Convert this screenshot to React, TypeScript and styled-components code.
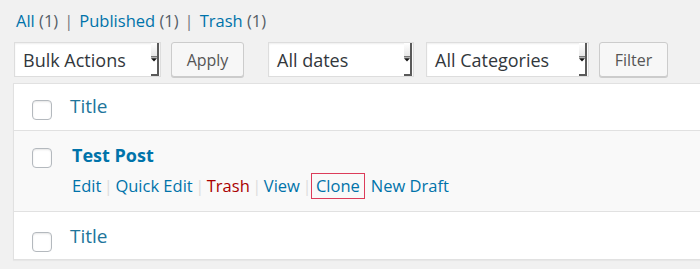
import React from "react";
import styled, { createGlobalStyle } from "styled-components";

const Global = createGlobalStyle`
  html, body { margin: 0; padding: 0; background: #f1f1f1; }
  body { font-family: "Open Sans", "Noto Sans", sans-serif; color: #32373c; overflow: hidden; }
`;

const Page = styled.div`
  padding: 9px 0 0 13px;
  width: 700px;
  height: 269px;
  box-sizing: border-box;
  overflow: hidden;
`;

const Views = styled.ul`
  list-style: none;
  margin: 0 0 0 3px;
  padding: 0;
  display: flex;
  align-items: center;
  height: 22px;
  font-size: 16.5px;
  color: #555d66;
`;

const ViewItem = styled.li`
  display: flex;
  align-items: center;
  white-space: pre;
`;

const ViewLink = styled.a`
  color: #0073aa;
  text-decoration: none;
`;

const Sep = styled.span`
  color: #72777c;
  margin: 0 6px;
`;

const Toolbar = styled.div`
  display: flex;
  align-items: center;
  margin-top: 11px;
  height: 35px;
`;

const SelectBox = styled.div<{ $w: number; $ml: number }>`
  width: ${(p) => p.$w}px;
  margin-left: ${(p) => p.$ml}px;
  height: 35px;
  box-sizing: border-box;
  background: #fff;
  border: 1px solid #ddd;
  box-shadow: inset 0 1px 2px rgba(0, 0, 0, 0.07);
  display: flex;
  align-items: center;
  padding-left: 8px;
  font-size: 18px;
  color: #32373c;
`;

const SelectText = styled.span`
  flex: 1;
  white-space: nowrap;
`;

const ArrowWrap = styled.span`
  width: 8px;
  height: 33px;
  margin-right: 1px;
  display: flex;
  align-items: center;
  justify-content: center;
  border-right: 2px solid #5a5a5a;
  border-bottom: 2px solid #5a5a5a;
  box-sizing: border-box;
  background: linear-gradient(#fff 0, #e8e8e8 40%, #fff 60%);
`;

const Button = styled.div<{ $w: number; $ml: number }>`
  width: ${(p) => p.$w}px;
  margin-left: ${(p) => p.$ml}px;
  height: 35px;
  box-sizing: border-box;
  border: 1px solid #ccc;
  border-radius: 3px;
  background: #f7f7f7;
  box-shadow: 0 1px 0 #ccc;
  display: flex;
  align-items: center;
  justify-content: center;
  font-size: 16px;
  color: #555;
`;

const Table = styled.div`
  margin-top: 6px;
  width: 700px;
  background: #fff;
  border: 1px solid #e1e1e1;
  border-right: none;
  box-shadow: 0 1px 1px rgba(0, 0, 0, 0.04);
`;

const Row = styled.div<{ $h: number; $alt?: boolean; $top?: boolean }>`
  display: flex;
  align-items: flex-start;
  height: ${(p) => p.$h}px;
  box-sizing: border-box;
  background: ${(p) => (p.$alt ? "#f9f9f9" : "#fff")};
  border-top: ${(p) => (p.$top ? "1px solid #e1e1e1" : "none")};
  border-bottom: ${(p) => (p.$top ? "1px solid #e1e1e1" : "none")};
`;

const CheckCell = styled.div<{ $pt: number }>`
  width: 56px;
  display: flex;
  justify-content: center;
  padding-top: ${(p) => p.$pt}px;
`;

const Check = styled.span`
  width: 20px;
  height: 20px;
  box-sizing: border-box;
  border: 1px solid #b4b9be;
  border-radius: 4px;
  background: #fff;
  box-shadow: inset 0 1px 2px rgba(0, 0, 0, 0.1);
  display: block;
`;

const TitleCell = styled.div<{ $pt: number }>`
  padding-top: ${(p) => p.$pt}px;
  display: flex;
  flex-direction: column;
`;

const HeadTitle = styled.a`
  color: #21759b;
  font-size: 19px;
  text-decoration: none;
  line-height: 24px;
`;

const PostTitle = styled.a`
  color: #0073aa;
  font-size: 18px;
  font-weight: 700;
  text-decoration: none;
  line-height: 24px;
  margin-left: 2px;
`;

const Actions = styled.div`
  display: flex;
  align-items: center;
  margin-top: 6px;
  margin-left: 2px;
  font-size: 16.5px;
  line-height: 20px;
`;

const Action = styled.a<{ $danger?: boolean; $boxed?: boolean }>`
  color: ${(p) => (p.$danger ? "#a00" : "#0073aa")};
  text-decoration: none;
  ${(p) =>
    p.$boxed
      ? "border: 1px solid #dc3c5a; padding: 2px 4px; margin: 0 6px 0 -3px;"
      : ""}
`;

const ActionSep = styled.span`
  color: #ddd;
  margin: 0 2.5px;
`;

function Arrow() {
  return (
    <ArrowWrap>
      <svg width="7" height="6" viewBox="0 0 7 6">
        <rect x="0" y="0" width="7" height="1" fill="#222" />
        <polygon points="0,2 7,2 3.5,6" fill="#111" />
      </svg>
    </ArrowWrap>
  );
}

function Select({ label, w, ml }: { label: string; w: number; ml: number }) {
  return (
    <SelectBox $w={w} $ml={ml}>
      <SelectText>{label}</SelectText>
      <Arrow />
    </SelectBox>
  );
}

export default function App() {
  const actions: { t: string; danger?: boolean; boxed?: boolean }[] = [
    { t: "Edit" },
    { t: "Quick Edit" },
    { t: "Trash", danger: true },
    { t: "View" },
    { t: "Clone", boxed: true },
    { t: "New Draft" },
  ];
  return (
    <>
      <Global />
      <Page>
        <Views>
          <ViewItem>
            <ViewLink href="#">All</ViewLink> (1)
          </ViewItem>
          <Sep>|</Sep>
          <ViewItem>
            <ViewLink href="#">Published</ViewLink> (1)
          </ViewItem>
          <Sep>|</Sep>
          <ViewItem>
            <ViewLink href="#">Trash</ViewLink> (1)
          </ViewItem>
        </Views>
        <Toolbar>
          <Select label="Bulk Actions" w={147} ml={1} />
          <Button $w={73} $ml={10}>Apply</Button>
          <Select label="All dates" w={146} ml={24} />
          <Select label="All Categories" w={163} ml={12} />
          <Button $w={69} $ml={10}>Filter</Button>
        </Toolbar>
        <Table>
          <Row $h={46}>
            <CheckCell $pt={16}>
              <Check />
            </CheckCell>
            <TitleCell $pt={10}>
              <HeadTitle href="#">Title</HeadTitle>
            </TitleCell>
          </Row>
          <Row $h={82} $alt $top>
            <CheckCell $pt={17}>
              <Check />
            </CheckCell>
            <TitleCell $pt={12}>
              <PostTitle href="#">Test Post</PostTitle>
              <Actions>
                {actions.map((a, i) => (
                  <React.Fragment key={a.t}>
                    <Action href="#" $danger={a.danger} $boxed={a.boxed}>
                      {a.t}
                    </Action>
                    {i < actions.length - 1 && !a.boxed && (
                      <ActionSep>|</ActionSep>
                    )}
                  </React.Fragment>
                ))}
              </Actions>
            </TitleCell>
          </Row>
          <Row $h={47}>
            <CheckCell $pt={20}>
              <Check />
            </CheckCell>
            <TitleCell $pt={12}>
              <HeadTitle href="#">Title</HeadTitle>
            </TitleCell>
          </Row>
        </Table>
      </Page>
    </>
  );
}
